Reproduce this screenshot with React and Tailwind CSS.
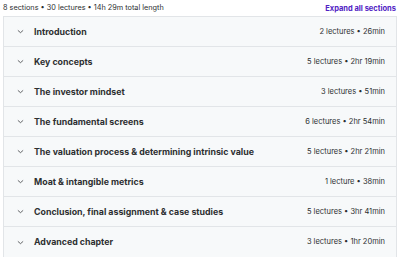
import React from 'react';

const sections = [
  { title: 'Introduction', meta: '2 lectures • 26min' },
  { title: 'Key concepts', meta: '5 lectures • 2hr 19min' },
  { title: 'The investor mindset', meta: '3 lectures • 51min' },
  { title: 'The fundamental screens', meta: '6 lectures • 2hr 54min' },
  { title: 'The valuation process & determining intrinsic value', meta: '5 lectures • 2hr 21min' },
  { title: 'Moat & intangible metrics', meta: '1 lecture • 38min' },
  { title: 'Conclusion, final assignment & case studies', meta: '5 lectures • 3hr 41min' },
  { title: 'Advanced chapter', meta: '3 lectures • 1hr 20min' },
];

const Chevron = () => (
  <svg width="7" height="7" viewBox="0 0 24 24" fill="none" stroke="#2d2f31" strokeWidth="2.5" strokeLinecap="round" strokeLinejoin="round">
    <path d="M4 9l8 7 8-7" />
  </svg>
);

const SectionRow = ({ title, meta }) => (
  <div className="flex items-center h-[30px] bg-[#f7f9fa] border-b border-[#e2e5e8] last:border-b-0 pl-[13px] pr-[11px]">
    <Chevron />
    <span className="ml-[10px] text-[8.8px] font-bold text-[#2d2f31]">{title}</span>
    <span className="ml-auto text-[7.5px] text-[#2d2f31]">{meta}</span>
  </div>
);

export default function App() {
  return (
    <div className="w-[400px] h-[257px] bg-white px-[3px] pt-[1px]" style={{ fontFamily: 'Inter, "Noto Sans", sans-serif' }}>
      {/* Header */}
      <div className="flex items-center justify-between h-[15px] pr-[1px]">
        <span className="text-[7.3px] text-[#2d2f31]">8 sections • 30 lectures • 14h 29m total length</span>
        <button className="text-[7.5px] font-bold text-[#5022c3]">Expand all sections</button>
      </div>

      {/* Sections */}
      <div className="border border-[#e2e5e8]">
        {sections.map((s) => (
          <SectionRow key={s.title} title={s.title} meta={s.meta} />
        ))}
      </div>
    </div>
  );
}
